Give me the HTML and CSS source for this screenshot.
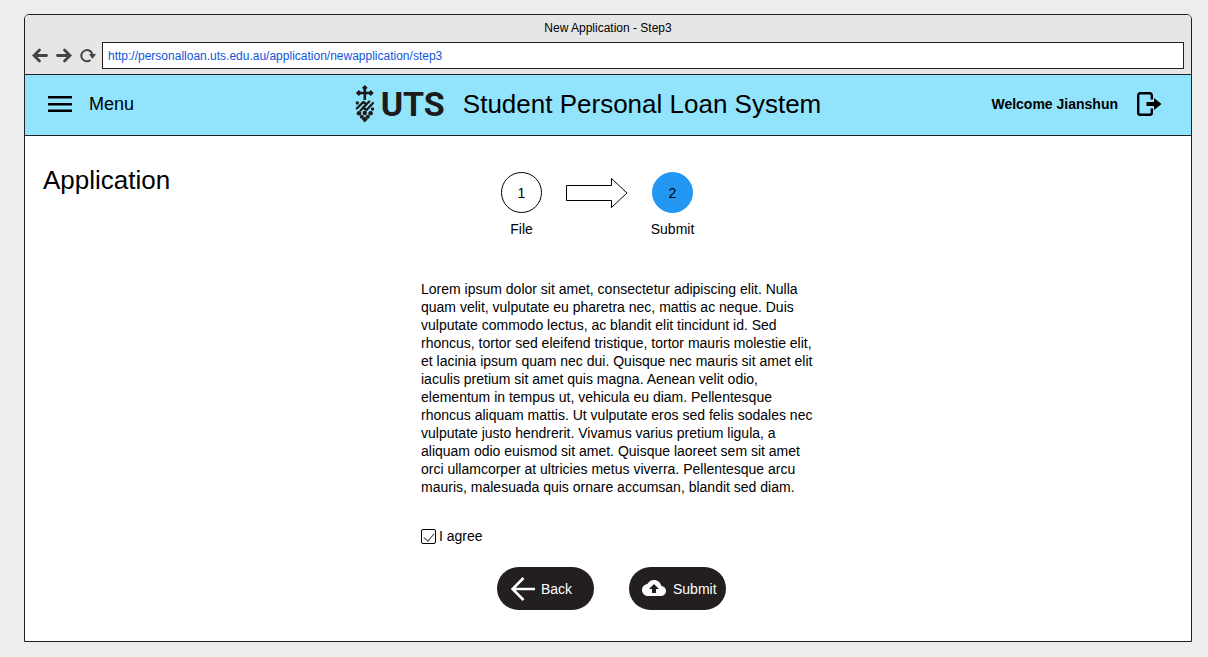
FILE: index.html
```html
<!DOCTYPE html>
<html lang="en">
<head>
<meta charset="utf-8">
<meta name="viewport" content="width=device-width, initial-scale=1">
<title>New Application - Step3</title>
<link rel="stylesheet" href="styles.css">
</head>
<body>
<div class="window">
  <div class="chrome">
    <div class="chrome-title">New Application - Step3</div>
    <div class="toolbar">
      <button class="tool" type="button" aria-label="Back">
        <svg width="16" height="16" viewBox="0 0 16 16"><path d="M7.500 2 2 7.500l5.500 5.500M2 7.500H14.500" fill="none" stroke="#444" stroke-width="2.800" stroke-linecap="round"/></svg>
      </button>
      <button class="tool" type="button" aria-label="Forward">
        <svg width="16" height="16" viewBox="0 0 16 16"><path d="M8.500 2 14 7.500l-5.500 5.500M14 7.500H1.500" fill="none" stroke="#444" stroke-width="2.800" stroke-linecap="round"/></svg>
      </button>
      <button class="tool" type="button" aria-label="Reload">
        <svg width="16" height="16" viewBox="0 0 16 16"><path d="M10.500 12A5.600 5.600 0 1 1 12.500 7" fill="none" stroke="#444" stroke-width="2"/><path d="M9 6h7L12.500 11z" fill="#444"/></svg>
      </button>
      <input class="address" type="text" aria-label="Address" value="http://personalloan.uts.edu.au/application/newapplication/step3">
    </div>
  </div>

  <header class="header">
    <button class="menu" type="button">
      <svg width="24" height="16" viewBox="0 0 24 16"><path d="M0 0h24v2.500H0zM0 7h24v2.500H0zM0 13.500h24V16H0z"/></svg>
      <span>Menu</span>
    </button>
    <div class="brand">
      <div class="logo">
        <svg width="20" height="38" viewBox="0 0 20 38" fill="#1b1b1b">
          <path d="M8.500 3h2.600v12H8.500zM3 6.700h13.500v2.600H3z"/>
          <path d="M9.800 0l2.800 2.800-2.800 2.800L7 2.800zM3.800 5l3 3-3 3-3-3zM15.800 5l3 3-3 3-3-3z"/>
          <circle cx="2.300" cy="18" r="1.700"/>
          <circle cx="17.500" cy="24" r="1.700"/>
          <g fill="none" stroke="#1b1b1b" stroke-width="2.300" stroke-linecap="round" stroke-linejoin="round">
            <path d="M1.800 23.500 8.300 17l3 2.500L5.500 25.500M18 18l-6.500 7-3.500-2.500L14.300 16.500"/>
          </g>
          <circle cx="4" cy="28.300" r="2.300"/>
          <circle cx="9.800" cy="28" r="2.200"/>
          <circle cx="15.600" cy="28.300" r="2.300"/>
          <circle cx="6.800" cy="31.800" r="2"/>
          <circle cx="12.800" cy="31.800" r="2"/>
          <path d="M9.800 31.500l3 2.700-3 3.300-3-3.300z"/>
        </svg>
        <span class="wordmark">UTS</span>
      </div>
      <span class="system-name">Student Personal Loan System</span>
    </div>
    <div class="account">
      <span>Welcome Jianshun</span>
      <button class="logout" type="button" aria-label="Log out">
        <svg width="25" height="24" viewBox="0 0 25 24"><path d="M14.800 7.500V3.200a2 2 0 0 0-2-2H3.200a2 2 0 0 0-2 2v17.600a2 2 0 0 0 2 2h9.600a2 2 0 0 0 2-2V16.500" fill="none" stroke="#000" stroke-width="2.400"/><path d="M9.500 10H17V6L24.500 12 17 18V14H9.500z"/></svg>
      </button>
    </div>
  </header>

  <main class="main">
    <h1 class="page-title">Application</h1>
    <form class="content">
      <ol class="steps">
        <li class="step"><span class="step-number">1</span><span>File</span></li>
        <li class="step-arrow" aria-hidden="true">
          <svg width="62" height="30" viewBox="0 0 62 30"><path d="M.5 7.500H45.500V.5L61 15 45.500 29.500V22.500H.5z" fill="#fff" stroke="#000"/></svg>
        </li>
        <li class="step" aria-current="step"><span class="step-number step-number-current">2</span><span>Submit</span></li>
      </ol>
      <p class="terms">Lorem ipsum dolor sit amet, consectetur adipiscing elit. Nulla quam velit, vulputate eu pharetra nec, mattis ac neque. Duis vulputate commodo lectus, ac blandit elit tincidunt id. Sed rhoncus, tortor sed eleifend tristique, tortor mauris molestie elit, et lacinia ipsum quam nec dui. Quisque nec mauris sit amet elit iaculis pretium sit amet quis magna. Aenean velit odio, elementum in tempus ut, vehicula eu diam. Pellentesque rhoncus aliquam mattis. Ut vulputate eros sed felis sodales nec vulputate justo hendrerit. Vivamus varius pretium ligula, a aliquam odio euismod sit amet. Quisque laoreet sem sit amet orci ullamcorper at ultricies metus viverra. Pellentesque arcu mauris, malesuada quis ornare accumsan, blandit sed diam.</p>
      <label class="agree"><input class="agree-box" type="checkbox" checked>I agree</label>
      <div class="actions">
        <button class="action" type="button">
          <svg width="24" height="24" viewBox="0 0 24 24"><path d="M12.500 1 1.500 12l11 11M2 12h22" fill="none" stroke="#fff" stroke-width="2.600"/></svg>
          <span>Back</span>
        </button>
        <button class="action action-submit" type="submit">
          <svg width="24" height="24" viewBox="0 0 24 24"><path d="M19.350 9.040C18.670 5.590 15.640 3 12 3 9.110 3 6.600 4.640 5.350 7.040 2.340 7.360 0 9.910 0 13c0 3.310 2.690 6 6 6h13c2.760 0 5-2.240 5-5 0-2.640-2.050-4.780-4.650-4.960zM14 12v4h-4v-4H7l5-5 5 5h-3z" fill="#fff"/></svg>
          <span>Submit</span>
        </button>
      </div>
    </form>
  </main>
</div>
</body>
</html>
```
FILE: styles.css
```css
* {
  box-sizing: border-box;
}

body {
  margin: 0;
  min-height: 100vh;
  padding: 14px 16px 15px 24px;
  display: flex;
  background: #ededed;
  color: #000;
  font-family: "Liberation Sans", Arial, sans-serif;
  font-size: 14px;
  line-height: 18px;
}

button {
  border: 0;
  padding: 0;
  background: none;
  color: inherit;
  font: inherit;
  cursor: pointer;
}

svg {
  display: block;
  flex: none;
}

.window {
  flex: 1;
  display: flex;
  flex-direction: column;
  border: 1px solid #231f20;
  border-radius: 5px 5px 0 0;
  background: #fff;
  overflow: hidden;
}

.chrome {
  padding: 4px 7px 5px;
  background: #e6e6e6;
  border-bottom: 1px solid #231f20;
  font-size: 12px;
}

.chrome-title {
  text-align: center;
}

.toolbar {
  display: flex;
  align-items: center;
  gap: 8px;
  margin-top: 5px;
}

.address {
  flex: 1;
  min-width: 0;
  height: 27px;
  margin-left: -2px;
  padding: 0 5px;
  border: 1px solid #231f20;
  background: #fff;
  color: #1155d8;
  font: inherit;
}

.header {
  display: grid;
  grid-template-columns: 9fr auto 10fr;
  align-items: center;
  height: 61px;
  padding: 0 29px 2px 23px;
  background: #92e4fd;
  border-bottom: 1px solid #231f20;
}

.menu {
  display: flex;
  align-items: center;
  gap: 17px;
  font-size: 18px;
}

.brand,
.logo {
  display: flex;
  align-items: center;
}

.brand {
  gap: 18px;
}

.logo {
  gap: 6px;
}

.wordmark {
  color: #1b1b1b;
  font-family: Roboto, "Liberation Sans", sans-serif;
  font-size: 34px;
  font-weight: 700;
  line-height: 38px;
}

.system-name,
.page-title {
  font-size: 26px;
  font-weight: 400;
  line-height: 30px;
}

.account {
  display: flex;
  align-items: center;
  justify-content: flex-end;
  gap: 19px;
  font-weight: 700;
}

.main {
  flex: 1;
  display: grid;
  grid-template-columns: 1fr 392px 1fr;
  align-items: start;
  padding: 29px 0 31px 18px;
}

.page-title {
  margin: 0;
}

.content {
  padding-top: 7px;
}

.steps {
  display: flex;
  gap: 23px;
  margin: 0;
  padding: 0 0 0 79px;
  list-style: none;
}

.step {
  display: flex;
  flex-direction: column;
  align-items: center;
  gap: 7px;
  width: 43px;
}

.step-number {
  display: grid;
  place-items: center;
  width: 41px;
  height: 41px;
  border: 1px solid #000;
  border-radius: 50%;
}

.step-number-current {
  border-color: #2196f3;
  background: #2196f3;
}

.step-arrow {
  padding-top: 6px;
}

.terms {
  margin: 42px 0 31px;
}

.agree {
  display: flex;
  align-items: center;
  gap: 3px;
}

.agree-box {
  appearance: none;
  display: grid;
  place-items: center;
  width: 15px;
  height: 15px;
  margin: 0;
  border: 1px solid #000;
  border-radius: 2px;
}

.agree-box:checked::before {
  content: "";
  width: 5px;
  height: 9px;
  border: solid #444;
  border-width: 0 1px 1px 0;
  transform: rotate(40deg);
}

.actions {
  display: flex;
  gap: 35px;
  margin-top: 22px;
  padding-left: 76px;
}

.action {
  display: flex;
  align-items: center;
  gap: 6px;
  width: 97px;
  height: 43px;
  padding-left: 14px;
  border-radius: 22px;
  background: #231f20;
  color: #fff;
}

.action-submit {
  gap: 7px;
  padding-left: 13px;
}
```
